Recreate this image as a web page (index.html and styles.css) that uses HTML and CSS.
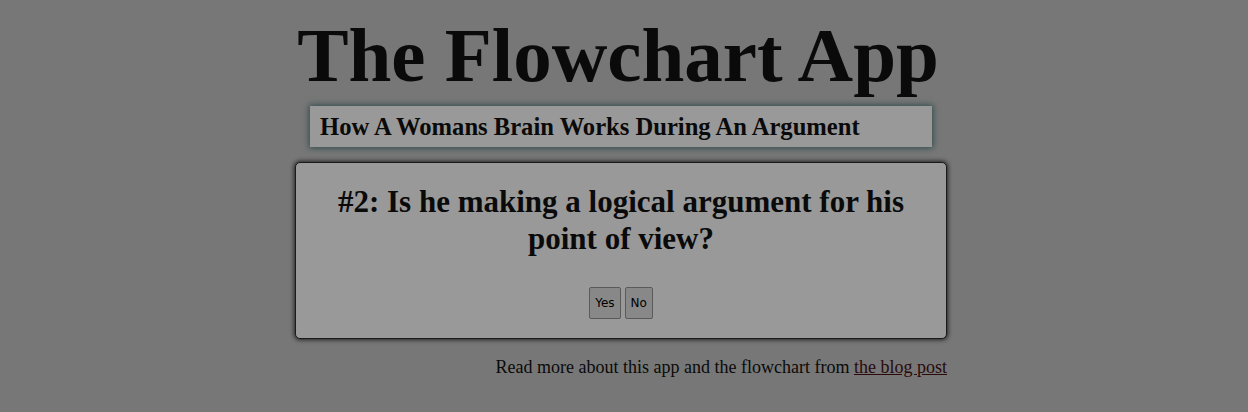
FILE: index.html
```html
<!DOCTYPE html>
<html>
<head>
<meta charset="utf-8">
<title>The Flowchart App</title>
<link rel="stylesheet" href="styles.css">
</head>
<body>
<div class="page">
  <h1 class="title">The Flowchart App</h1>
  <div class="subtitle">How A Womans Brain Works During An Argument</div>
  <div class="card">
    <h2 class="question">#2: Is he making a logical argument for his point of view?</h2>
    <div class="buttons">
      <button class="btn">Yes</button>
      <button class="btn">No</button>
    </div>
  </div>
  <p class="footer">Read more about this app and the flowchart from <a href="#">the blog post</a></p>
</div>
</body>
</html>
```

FILE: styles.css
```css
html, body {
  margin: 0;
  padding: 0;
  background: #777777;
}
body {
  font-family: "Liberation Serif", "Times New Roman", serif;
  color: #0a0a0a;
  padding-right: 6px;
}
.page {
  width: 652px;
  margin: 0 auto;
  display: flex;
  flex-direction: column;
}
.title {
  margin: 14px 0 0 0;
  font-size: 77px;
  line-height: 82px;
  font-weight: bold;
  text-align: center;
  white-space: nowrap;
  padding-right: 6px;
}
.subtitle {
  margin: 10px 15px 0 15px;
  background: #999999;
  padding: 0 10px;
  height: 41px;
  line-height: 41px;
  font-size: 24.6px;
  font-weight: bold;
  box-shadow: 0 0 6px 1px #2f4a4a;
}
.card {
  margin-top: 15px;
  background: #999999;
  border: 1px solid #1a1a1a;
  border-radius: 5px;
  box-shadow: 0 0 4px 1px #222;
  padding: 20px 20px 19px;
  display: flex;
  flex-direction: column;
  align-items: center;
}
.question {
  margin: 0;
  font-size: 31px;
  line-height: 37px;
  font-weight: bold;
  text-align: center;
  width: 600px;
}
.buttons {
  margin-top: 30px;
  display: flex;
  gap: 4px;
}
.btn {
  font-family: "DejaVu Sans", Verdana, sans-serif;
  font-size: 12px;
  height: 32px;
  padding: 0 5px;
  background: #888888;
  border: 1px solid #5a5a5a;
  border-radius: 2px;
  color: #000;
}
.footer {
  margin: 18px 0 0 0;
  text-align: right;
  font-size: 18px;
}
.footer a {
  color: #2a0a0a;
}
```
